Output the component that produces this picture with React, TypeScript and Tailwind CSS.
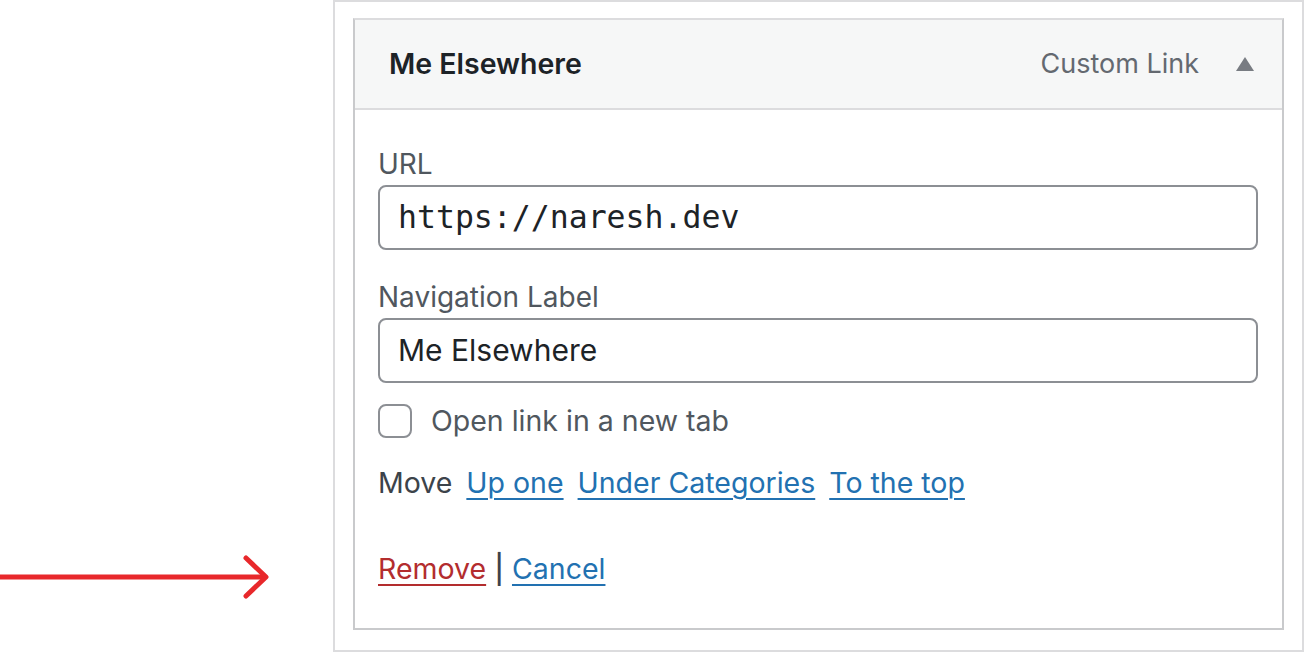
const sans = { fontFamily: "Inter, 'Noto Sans', sans-serif" };

const App = () => {
  return (
    <div className="flex h-[653px] w-[1305px] bg-white" style={sans}>
      {/* left: red arrow pointing at Remove */}
      <div className="w-[333px] shrink-0 pt-[555px]">
        <svg width="272" height="44" viewBox="0 0 272 44" fill="none">
          <path d="M0 22 H266" stroke="#e8282b" strokeWidth="5" />
          <path
            d="M246 3 L266 22 L246 41"
            stroke="#e8282b"
            strokeWidth="5"
            strokeLinecap="round"
            strokeLinejoin="round"
          />
        </svg>
      </div>

      <div className="h-[652px] w-[971px] shrink-0 border-2 border-[#dcdcde] pl-[18px] pt-4">
        <div className="h-[612px] w-[931px] border-2 border-[#dcdcde] border-x-[#c9cacc] border-b-[#c9cacc]">
          <div className="flex h-[90px] items-center border-b-2 border-[#dcdcde] bg-[#f6f7f7] pl-[34px] pr-[28px]">
            <span className="text-[28.5px] font-semibold text-[#1d2327]">Me Elsewhere</span>
            <span className="ml-auto text-[27px] text-[#646970]">Custom Link</span>
            <svg className="ml-[37px]" width="18" height="14" viewBox="0 0 18 14">
              <path d="M9 0 L18 14 H0 Z" fill="#787c82" />
            </svg>
          </div>

          <div className="pl-[23px] pr-[24px] pt-[36px]">
            <div className="text-[28px] leading-[36px] text-[#50575e]">URL</div>
            <div className="mt-[3px] flex h-[65px] items-center rounded-[8px] border-2 border-[#8c8f94] pl-[18px]">
              <span
                className="text-[31.5px] text-[#1d2327]"
                style={{ fontFamily: "'DejaVu Sans Mono', 'Liberation Mono', monospace" }}
              >
                https://naresh.dev
              </span>
            </div>

            <div className="mt-[29px] text-[28px] leading-[36px] text-[#50575e]">Navigation Label</div>
            <div className="mt-[3px] flex h-[65px] items-center rounded-[8px] border-2 border-[#8c8f94] pl-[18px]">
              <span className="text-[30px] text-[#1d2327]">Me Elsewhere</span>
            </div>

            <div className="mt-[17px] flex items-center">
              <div className="h-[34px] w-[34px] rounded-[8px] border-2 border-[#8c8f94]" />
              <span className="ml-[19px] text-[28.5px] text-[#50575e]">Open link in a new tab</span>
            </div>

            <div className="mt-[20px] flex items-center gap-[14px] text-[28.5px] leading-[40px]">
              <span className="text-[#3c434a]">Move</span>
              <a className="text-[#2271b1] underline decoration-2 underline-offset-[5px]">Up one</a>
              <a className="text-[#2271b1] underline decoration-2 underline-offset-[5px]">Under Categories</a>
              <a className="text-[#2271b1] underline decoration-2 underline-offset-[5px]">To the top</a>
            </div>

            <div className="mt-[46px] flex items-center gap-[8px] text-[28.5px] leading-[40px]">
              <a className="text-[#b32d2e] underline decoration-2 underline-offset-[5px]">Remove</a>
              <span className="font-medium text-[#3c434a]">|</span>
              <a className="text-[#2271b1] underline decoration-2 underline-offset-[5px]">Cancel</a>
            </div>
          </div>
        </div>
      </div>
    </div>
  );
};

export default App;
